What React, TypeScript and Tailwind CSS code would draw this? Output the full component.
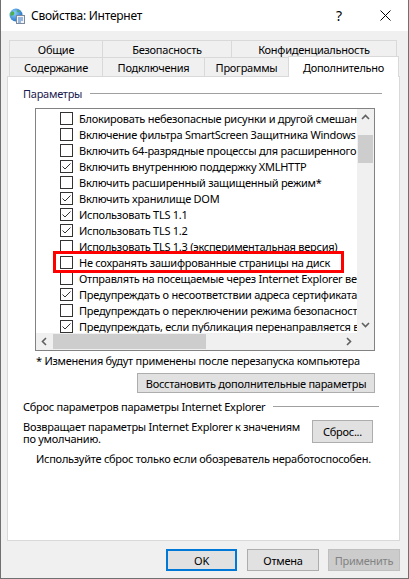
import React from "react";

const rows: [string, boolean][] = [
  ["Блокировать небезопасные рисунки и другой смешанный контент", false],
  ["Включение фильтра SmartScreen Защитника Windows", false],
  ["Включить 64-разрядные процессы для расширенного защищенного режима*", false],
  ["Включить внутреннюю поддержку XMLHTTP", true],
  ["Включить расширенный защищенный режим*", false],
  ["Включить хранилище DOM", true],
  ["Использовать TLS 1.1", true],
  ["Использовать TLS 1.2", true],
  ["Использовать TLS 1.3 (экспериментальная версия)", false],
  ["Не сохранять зашифрованные страницы на диск", false],
  ["Отправлять на посещаемые через Internet Explorer веб-сайты запросы \"Do Not Track\"", false],
  ["Предупреждать о несоответствии адреса сертификата*", true],
  ["Предупреждать о переключении режима безопасности", false],
  ["Предупреждать, если публикация перенаправляется в зону, не допускающую публикации", true],
];

const Chevron = ({ dir }: { dir: "up" | "down" | "left" | "right" }) => {
  const pts = {
    up: "1,6 4.5,2.5 8,6",
    down: "1,3 4.5,6.5 8,3",
    left: "6,1 2.5,4.5 6,8",
    right: "3,1 6.5,4.5 3,8",
  }[dir];
  return (
    <svg width="9" height="9" viewBox="0 0 9 9">
      <polyline points={pts} fill="none" stroke="#606060" strokeWidth="1.6" />
    </svg>
  );
};

const Checkbox = ({ checked }: { checked: boolean }) => (
  <div className="w-[13px] h-[13px] shrink-0 border border-[#333333] bg-white flex items-center justify-center">
    {checked && (
      <svg width="11" height="11" viewBox="0 0 11 11">
        <polyline points="1.5,5.5 4,8 9.5,2.5" fill="none" stroke="#333333" strokeWidth="1" />
      </svg>
    )}
  </div>
);

const IeIcon = () => (
  <svg width="16" height="16" viewBox="0 0 16 16">
    <defs>
      <radialGradient id="g" cx="0.35" cy="0.35" r="0.7">
        <stop offset="0" stopColor="#8fd3ff" />
        <stop offset="1" stopColor="#1f6fc2" />
      </radialGradient>
    </defs>
    <circle cx="7" cy="7" r="6.5" fill="url(#g)" />
    <path d="M3 3.5 C5 3 6 5 5 6.5 C4 8 3 7 2 8 C1 6 1.5 4.5 3 3.5Z" fill="#4caf3f" />
    <path d="M8 2 C10 2 11 3 10 4 C9 5 8 4 8 2Z" fill="#4caf3f" />
    <rect x="7.5" y="7.5" width="8" height="8" fill="#f4f4f4" stroke="#7c8aa0" strokeWidth="1" />
    <line x1="9" y1="10" x2="14" y2="10" stroke="#3a78c8" strokeWidth="1" />
    <line x1="9" y1="12" x2="14" y2="12" stroke="#3a78c8" strokeWidth="1" />
    <line x1="9" y1="14" x2="12" y2="14" stroke="#3a78c8" strokeWidth="1" />
  </svg>
);

const Tab = ({ label, w, last }: { label: string; w: string; last?: boolean }) => (
  <div
    className={`${w} h-full flex items-center justify-center border-t border-l border-[#d9d9d9] ${
      last ? "border-r" : ""
    } bg-[#f0f0f0]`}
  >
    {label}
  </div>
);

const Btn = ({ children, className }: { children: React.ReactNode; className: string }) => (
  <div className={`flex items-center justify-center bg-[#e1e1e1] border border-[#adadad] ${className}`}>{children}</div>
);

export default function App() {
  return (
    <div
      className="w-[409px] h-[579px] bg-[#f0f0f0] border-x border-b border-[#707070] flex flex-col text-[11px] tracking-[-0.26px] text-black leading-none whitespace-nowrap"
      style={{ fontFamily: '"Segoe UI", "Noto Sans", sans-serif' }}
    >
      {/* title bar */}
      <div className="h-[31px] bg-white flex items-center shrink-0">
        <div className="ml-[8px]">
          <IeIcon />
        </div>
        <span className="ml-[6px] text-[12px] tracking-[-0.25px]">Свойства: Интернет</span>
        <div className="ml-auto flex items-center">
          <span className="w-[46px] text-center text-[14px]">?</span>
          <div className="w-[46px] flex justify-center">
            <svg width="11" height="11" viewBox="0 0 11 11">
              <path d="M0.5 0.5 L10.5 10.5 M10.5 0.5 L0.5 10.5" stroke="#000" strokeWidth="1" />
            </svg>
          </div>
        </div>
      </div>

      {/* tabs */}
      <div className="mt-[9px] ml-[8px] flex flex-col">
        <div className="h-[17px] flex">
          <Tab label="Общие" w="w-[93px]" />
          <Tab label="Безопасность" w="w-[129px]" />
          <Tab label="Конфиденциальность" w="w-[166px]" last />
        </div>
        <div className="h-[19px] flex items-end">
          <Tab label="Содержание" w="w-[93px]" />
          <Tab label="Подключения" w="w-[102px]" />
          <Tab label="Программы" w="w-[84px]" />
          <div className="relative z-10 w-[111px] h-[21px] -mb-[1px] bg-white border-t border-x border-[#d9d9d9] flex items-center justify-center">
            Дополнительно
          </div>
        </div>
      </div>

      {/* panel */}
      <div className="ml-[6px] w-[393px] h-[465px] bg-white border border-[#d9d9d9] flex flex-col">
        <div className="mt-[10px] ml-[15px] mr-[17px] flex items-center h-[12px]">
          <span className="text-[#1a1a50]">Параметры</span>
          <div className="flex-1 ml-[8px] h-px bg-[#a0a0a0]" />
        </div>

        {/* listbox */}
        <div className="mt-[9px] ml-[27px] w-[340px] h-[243px] border border-[#828282] grid grid-cols-[1fr_17px] grid-rows-[1fr_17px]">
          <div className="relative overflow-hidden pt-[1px]">
            {rows.map(([t, c]) => (
              <div key={t} className="h-[16px] flex items-center pl-[24px]">
                <Checkbox checked={c} />
                <span className="ml-[6px]">{t}</span>
              </div>
            ))}
            <div className="absolute left-[17px] top-[142px] w-[291px] h-[22px] border-[3px] border-[#ff0000]" />
          </div>
          <div className="bg-[#f0f0f0] flex flex-col items-center">
            <div className="h-[17px] flex items-center justify-center">
              <Chevron dir="up" />
            </div>
            <div className="mt-[9px] w-[15px] h-[28px] bg-[#cdcdcd]" />
            <div className="mt-auto h-[17px] flex items-center justify-center">
              <Chevron dir="down" />
            </div>
          </div>
          <div className="bg-[#f0f0f0] flex items-center">
            <div className="w-[17px] flex justify-center">
              <Chevron dir="left" />
            </div>
            <div className="w-[153px] h-[15px] bg-[#cdcdcd]" />
            <div className="ml-auto w-[17px] flex justify-center">
              <Chevron dir="right" />
            </div>
          </div>
          <div className="bg-[#f0f0f0]" />
        </div>

        <div className="mt-[3px] ml-[28px] h-[12px] flex items-center">* Изменения будут применены после перезапуска компьютера</div>

        <div className="mt-[7px] ml-[129px] w-[238px]">
          <Btn className="h-[20px]">Восстановить дополнительные параметры</Btn>
        </div>

        <div className="mt-[7px] ml-[15px] mr-[20px] flex items-center h-[12px]">
          <span>Сброс параметров параметры Internet Explorer</span>
          <div className="flex-1 ml-[8px] h-px bg-[#a0a0a0]" />
        </div>

        <div className="mt-[8px] ml-[15px] mr-[26px] flex items-start">
          <div className="leading-[12px] mt-[1px]">
            Возвращает параметры Internet Explorer к значениям
            <br />
            по умолчанию.
          </div>
          <Btn className="ml-auto w-[61px] h-[23px]">Сброс...</Btn>
        </div>

        <div className="mt-[7px] ml-[28px] h-[12px] flex items-center">
          Используйте сброс только если обозреватель неработоспособен.
        </div>
      </div>

      {/* bottom buttons */}
      <div className="mt-[8px] ml-[165px] flex">
        <div className="w-[71px] h-[22px] flex items-center justify-center bg-[#e1e1e1] border-2 border-[#0078d7]">OK</div>
        <Btn className="ml-[10px] w-[72px] h-[22px]">Отмена</Btn>
        <div className="ml-[9px] w-[72px] h-[22px] flex items-center justify-center bg-[#cccccc] border border-[#bfbfbf] text-[#838383]">
          Применить
        </div>
      </div>
    </div>
  );
}
